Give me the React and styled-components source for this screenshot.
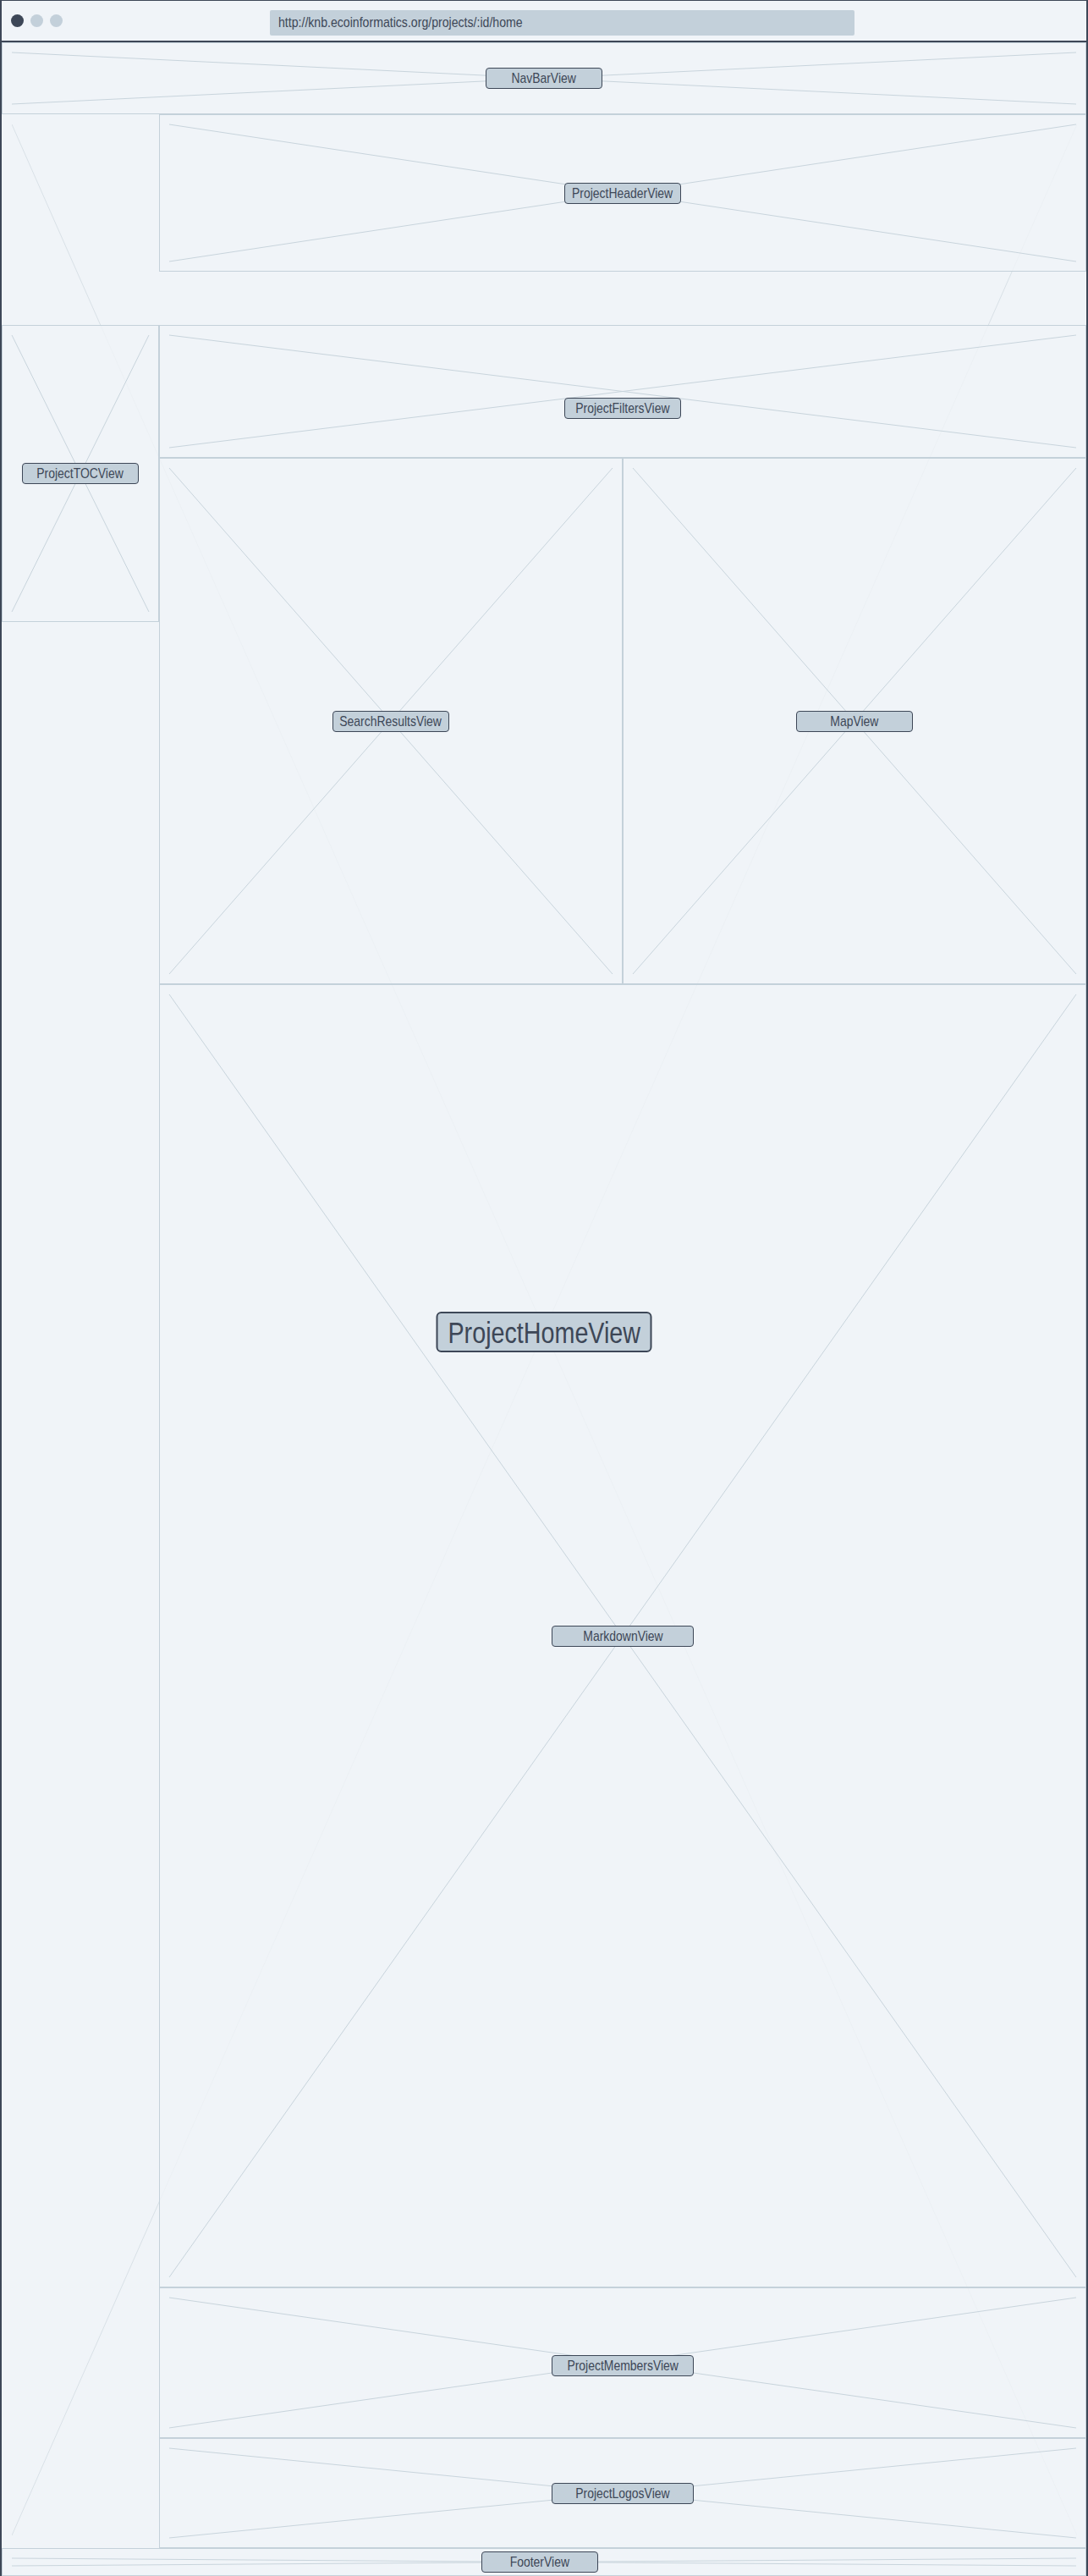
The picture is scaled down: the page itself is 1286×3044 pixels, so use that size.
import styled, { createGlobalStyle } from "styled-components";

const ink = "#3d4757";
const chip = "#c3d0da";
const line = "#c4d1da";
const paper = "#f0f4f8";
const font = `"Liberation Sans", Arial, sans-serif`;

const GlobalStyle = createGlobalStyle`
  html, body {
    margin: 0;
    padding: 0;
    background: ${paper};
  }
  * {
    box-sizing: border-box;
  }
`;

const Window = styled.div`
  width: 1286px;
  height: 3044px;
  background: ${paper};
  border: 2px solid ${ink};
  border-top-width: 1px;
  border-bottom: none;
  display: flex;
  flex-direction: column;
  font-family: ${font};
  color: ${ink};
  overflow: hidden;
`;

const TitleBar = styled.div`
  height: 49px;
  flex: none;
  display: flex;
  align-items: center;
  padding: 0 11px;
  border-bottom: 2px solid ${ink};
`;

const Dots = styled.div`
  display: flex;
  gap: 8px;
`;

const Dot = styled.span`
  width: 15px;
  height: 15px;
  border-radius: 50%;
  background: ${(p) => (p.$dark ? ink : chip)};
`;

const UrlBar = styled.div`
  margin-left: 245px;
  margin-top: 4px;
  width: 691px;
  height: 30px;
  border-radius: 2px;
  background: ${chip};
  display: flex;
  align-items: center;
  padding-left: 10px;
  font-size: 17px;
`;

// the wireframe font is a narrow one, so a regular sans is squeezed
const Narrow = styled.span`
  display: inline-block;
  white-space: nowrap;
  transform: scaleX(${(p) => p.$sx || 0.82});
  transform-origin: ${(p) => (p.$left ? "left center" : "center")};
`;

const Box = styled.div`
  position: relative;
  height: ${(p) => p.$h}px;
  flex: none;
  border: 1px solid ${line};
  background: rgba(240, 244, 248, 0.8);
  display: flex;
  align-items: center;
  justify-content: center;
`;

const Gap = styled.div`
  height: ${(p) => p.$h}px;
  flex: none;
`;

const CrossSvg = styled.svg`
  position: absolute;
  top: ${(p) => p.$inset}px;
  left: ${(p) => p.$inset}px;
  width: calc(100% - ${(p) => p.$inset * 2}px);
  height: calc(100% - ${(p) => p.$inset * 2}px);
  pointer-events: none;
  overflow: visible;
`;

const Label = styled.span`
  position: relative;
  z-index: 2;
  width: ${(p) => (p.$wide ? 168 : 138)}px;
  height: 25px;
  display: flex;
  align-items: center;
  justify-content: center;
  background: ${chip};
  border: 1px solid ${ink};
  border-radius: 4px;
  font-size: 17px;
  line-height: 1;
  transform: translate(${(p) => p.$dx || 0}px, ${(p) => p.$shift || 0}px);
`;

const Home = styled.div`
  position: relative;
  height: 2876px;
  flex: none;
  display: grid;
  grid-template-columns: 186px 1fr;
`;

const BigX = styled.svg`
  position: absolute;
  top: 12px;
  left: 12px;
  width: calc(100% - 23px);
  height: calc(100% - 27px);
  pointer-events: none;
  z-index: 0;
`;

const BigLabel = styled.span`
  position: absolute;
  z-index: 3;
  top: 50%;
  left: 50%;
  transform: translate(-50%, -48%);
  width: 255px;
  height: 48px;
  display: flex;
  align-items: center;
  justify-content: center;
  background: ${chip};
  border: 2px solid ${ink};
  border-radius: 6px;
  font-size: 35px;
  line-height: 1;
`;

const Column = styled.div`
  position: relative;
  z-index: 1;
  display: flex;
  flex-direction: column;
`;

const Split = styled.div`
  height: 622px;
  flex: none;
  display: grid;
  grid-template-columns: 1fr 1fr;
`;

const Cross = ({ color = "#c8d4dc", inset = 11 }) => (
  <CrossSvg $inset={inset} viewBox="0 0 100 100" preserveAspectRatio="none">
    <line x1="0" y1="0" x2="100" y2="100" stroke={color} strokeWidth="1" vectorEffect="non-scaling-stroke" />
    <line x1="100" y1="0" x2="0" y2="100" stroke={color} strokeWidth="1" vectorEffect="non-scaling-stroke" />
  </CrossSvg>
);

const Placeholder = ({ name, h, wide, shift, dx }) => (
  <Box $h={h}>
    <Cross />
    <Label $wide={wide} $shift={shift} $dx={dx}>
      <Narrow>{name}</Narrow>
    </Label>
  </Box>
);

export default function App() {
  return (
    <>
      <GlobalStyle />
      <Window>
        <TitleBar>
          <Dots>
            <Dot $dark />
            <Dot />
            <Dot />
          </Dots>
          <UrlBar>
            <Narrow $left $sx={0.83}>http://knb.ecoinformatics.org/projects/:id/home</Narrow>
          </UrlBar>
        </TitleBar>

        <Placeholder name="NavBarView" h={85} />

        <Home>
          <BigX viewBox="0 0 100 100" preserveAspectRatio="none">
            <line x1="0" y1="0" x2="100" y2="100" stroke="#d9e1e7" strokeWidth="1" vectorEffect="non-scaling-stroke" />
            <line x1="100" y1="0" x2="0" y2="100" stroke="#d9e1e7" strokeWidth="1" vectorEffect="non-scaling-stroke" />
          </BigX>
          <BigLabel>
            <Narrow>ProjectHomeView</Narrow>
          </BigLabel>

          <Column>
            <Gap $h={249} />
            <Placeholder name="ProjectTOCView" h={351} />
          </Column>

          <Column>
            <Placeholder name="ProjectHeaderView" h={186} />
            <Gap $h={63} />
            <Placeholder name="ProjectFiltersView" h={157} shift={20} />
            <Split>
              <Placeholder name="SearchResultsView" h={622} />
              <Placeholder name="MapView" h={622} />
            </Split>
            <Placeholder name="MarkdownView" h={1540} wide />
            <Placeholder name="ProjectMembersView" h={178} wide shift={3} />
            <Placeholder name="ProjectLogosView" h={130} wide />
          </Column>
        </Home>

        <Placeholder name="FooterView" h={33} dx={-5} />
      </Window>
    </>
  );
}
